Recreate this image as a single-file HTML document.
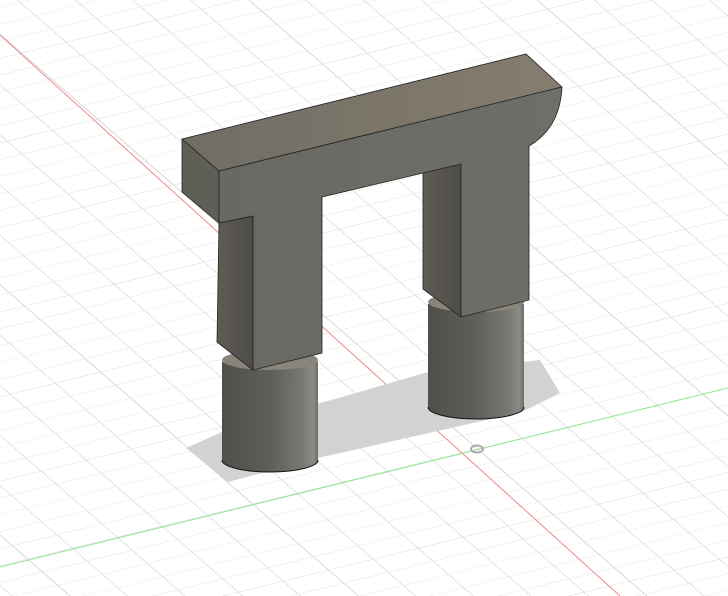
<!DOCTYPE html>
<html><head><style>html,body{margin:0;padding:0;background:#fff;overflow:hidden}svg{display:block}</style></head>
<body>
<svg width="728" height="596" viewBox="0 0 728 596" xmlns="http://www.w3.org/2000/svg">
<defs>
<pattern id="g" patternUnits="userSpaceOnUse" width="50" height="50" patternTransform="matrix(4.5,-1.1,1.52,1.32,477,449)">
<path d="M10 0V50M20 0V50M30 0V50M40 0V50M0 10H50M0 20H50M0 30H50M0 40H50" stroke="#e4e4e4" stroke-width="0.28" fill="none"/>
<path d="M0 0V50M0 0H50" stroke="#c6c6c6" stroke-width="0.35" fill="none"/>
</pattern>
<linearGradient id="top" x1="0" y1="0" x2="1" y2="0"><stop offset="0" stop-color="#706d64"/><stop offset="1" stop-color="#867d6f"/></linearGradient>
<linearGradient id="front" x1="0" y1="0" x2="1" y2="0"><stop offset="0" stop-color="#686963"/><stop offset="1" stop-color="#6f6f69"/></linearGradient>
<linearGradient id="side" x1="0" y1="0" x2="1" y2="0"><stop offset="0" stop-color="#5e5c55"/><stop offset="1" stop-color="#4f4c46"/></linearGradient>
<linearGradient id="cyl" x1="0" y1="0" x2="1" y2="0"><stop offset="0" stop-color="#4f4f4a"/><stop offset="0.5" stop-color="#5f5f5a"/><stop offset="0.85" stop-color="#7a7a74"/><stop offset="0.95" stop-color="#8c8c86"/><stop offset="1" stop-color="#6e6e68"/></linearGradient>
</defs>
<rect width="728" height="596" fill="#fff"/>
<rect width="728" height="596" fill="url(#g)"/>
<line x1="0" y1="35" x2="620" y2="596" stroke="#f08a8a" stroke-width="1"/>
<line x1="0" y1="567" x2="728" y2="388" stroke="#8fe88f" stroke-width="1"/>
<ellipse cx="477" cy="449" rx="6" ry="3.5" fill="none" stroke="#aaa" stroke-width="2"/>
<polygon points="186,448 222,432 428,372 540,360 560,393 522,412 318,458 228,482" fill="#d2d2d2"/>
<path d="M222 362 V460 A48 12 0 0 0 318 460 V362 Z" fill="url(#cyl)"/>
<path d="M222 460 A48 12 0 0 0 318 460" fill="none" stroke="#111" stroke-width="1"/>
<ellipse cx="270" cy="360" rx="48" ry="10" fill="#8a857a"/>
<path d="M428 304 V407 A48 12 0 0 0 524 407 V304 Z" fill="url(#cyl)"/>
<path d="M428 407 A48 12 0 0 0 524 407" fill="none" stroke="#111" stroke-width="1"/>
<ellipse cx="476" cy="302" rx="48" ry="10" fill="#8a857a"/>
<polygon points="219,223 253,216 253,370 217,342" fill="url(#side)" stroke="#222" stroke-width="0.8"/>
<polygon points="423,172 461,164 461,317 423,289" fill="url(#side)" stroke="#222" stroke-width="0.8"/>
<polygon points="182,139 219,171 219,223 182,192" fill="#5f5e57" stroke="#222" stroke-width="0.8"/>
<polygon points="182,139 526,54 562,87 219,171" fill="url(#top)" stroke="#222" stroke-width="0.8"/>
<path d="M219 171 L562 87 Q560 128 529 146 L529 300 L461 317 L461 164 L322 197 L322 353 L253 370 L253 216 L219 223 Z" fill="url(#front)" stroke="#222" stroke-width="0.8"/>
</svg>
</body></html>
